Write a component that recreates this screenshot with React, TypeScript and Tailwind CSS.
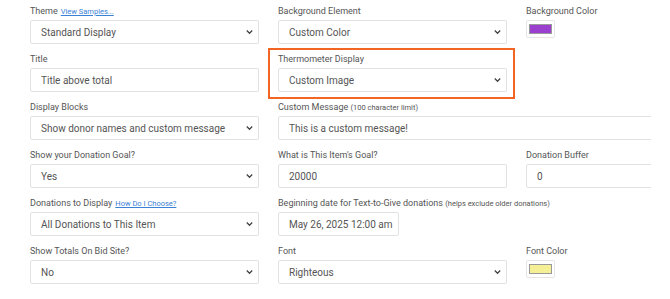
import type { ReactNode } from "react";

function Chevron() {
  return (
    <svg
      width="7"
      height="5"
      viewBox="0 0 7 5"
      className="absolute right-[5px] top-1/2 -translate-y-1/2"
      aria-hidden="true"
    >
      <path d="M0.8 1 L3.5 3.8 L6.2 1" fill="none" stroke="#444" strokeWidth="1.3" />
    </svg>
  );
}

function Label({ children }: { children: ReactNode }) {
  return (
    <div className="h-[12px] whitespace-nowrap text-[9px] leading-[12px] text-[#555]">
      {children}
    </div>
  );
}

function HelpLink({ children }: { children: ReactNode }) {
  return (
    <a className="ml-[3px] text-[7.5px] text-[#3b82d6] underline" href="#">
      {children}
    </a>
  );
}

function Select({ value }: { value: string }) {
  return (
    <div className="relative flex h-[24px] items-center whitespace-nowrap rounded-[2px] border border-[#e2e2e2] bg-white pl-[10px] text-[10px] text-[#555]">
      {value}
      <Chevron />
    </div>
  );
}

function TextBox({ value, className = "" }: { value: string; className?: string }) {
  return (
    <div
      className={`flex h-[24px] items-center whitespace-nowrap rounded-[2px] border border-[#e2e2e2] bg-white pl-[10px] text-[10px] text-[#555] ${className}`}
    >
      {value}
    </div>
  );
}

function Swatch({ color }: { color: string }) {
  return (
    <div className="flex h-[18px] w-[29px] items-center justify-center rounded-[2px] border border-[#e6e6e6] bg-white">
      <div className="h-[10px] w-[23px] border border-[#999]" style={{ backgroundColor: color }} />
    </div>
  );
}

function Field({ label, children }: { label: ReactNode; children: ReactNode }) {
  return (
    <div className="flex flex-col gap-[3px]">
      <Label>{label}</Label>
      {children}
    </div>
  );
}

export default function App() {
  return (
    <div
      className="h-[299px] w-[670px] overflow-hidden bg-white"
      style={{ fontFamily: "Roboto, 'Liberation Sans', sans-serif" }}
    >
      <div className="w-[651px] overflow-hidden pl-[30px] pt-[5px]">
        <div className="grid grid-cols-[229px_229px_140px] gap-x-[19px] gap-y-[9px]">
          {/* row 1 */}
          <Field
            label={
              <>
                Theme<HelpLink>View Samples...</HelpLink>
              </>
            }
          >
            <Select value="Standard Display" />
          </Field>
          <Field label="Background Element">
            <Select value="Custom Color" />
          </Field>
          <Field label="Background Color">
            <Swatch color="#9b3fcf" />
          </Field>

          {/* row 2 */}
          <Field label="Title">
            <TextBox value="Title above total" />
          </Field>
          <div className="relative">
            <div className="pointer-events-none absolute -bottom-[7px] -left-[10px] -right-[8px] -top-[5px] border-2 border-[#f26522]" />
            <Field label="Thermometer Display">
              <Select value="Custom Image" />
            </Field>
          </div>
          <div />

          {/* row 3 */}
          <Field label="Display Blocks">
            <Select value="Show donor names and custom message" />
          </Field>
          <div className="col-span-2">
            <Field
              label={
                <>
                  Custom Message <span className="text-[7.5px]">(100 character limit)</span>
                </>
              }
            >
              <TextBox value="This is a custom message!" className="w-[400px]" />
            </Field>
          </div>

          {/* row 4 */}
          <Field label="Show your Donation Goal?">
            <Select value="Yes" />
          </Field>
          <Field label="What is This Item's Goal?">
            <TextBox value="20000" />
          </Field>
          <Field label="Donation Buffer">
            <TextBox value="0" className="w-[170px]" />
          </Field>

          {/* row 5 */}
          <Field
            label={
              <>
                Donations to Display<HelpLink>How Do I Choose?</HelpLink>
              </>
            }
          >
            <Select value="All Donations to This Item" />
          </Field>
          <div className="col-span-2">
            <Field
              label={
                <>
                  Beginning date for Text-to-Give donations{" "}
                  <span className="text-[7.5px]">(helps exclude older donations)</span>
                </>
              }
            >
              <TextBox value="May 26, 2025 12:00 am" className="w-[121px]" />
            </Field>
          </div>

          {/* row 6 */}
          <Field label="Show Totals On Bid Site?">
            <Select value="No" />
          </Field>
          <Field label="Font">
            <Select value="Righteous" />
          </Field>
          <Field label="Font Color">
            <Swatch color="#f5ef95" />
          </Field>
        </div>
      </div>
    </div>
  );
}
